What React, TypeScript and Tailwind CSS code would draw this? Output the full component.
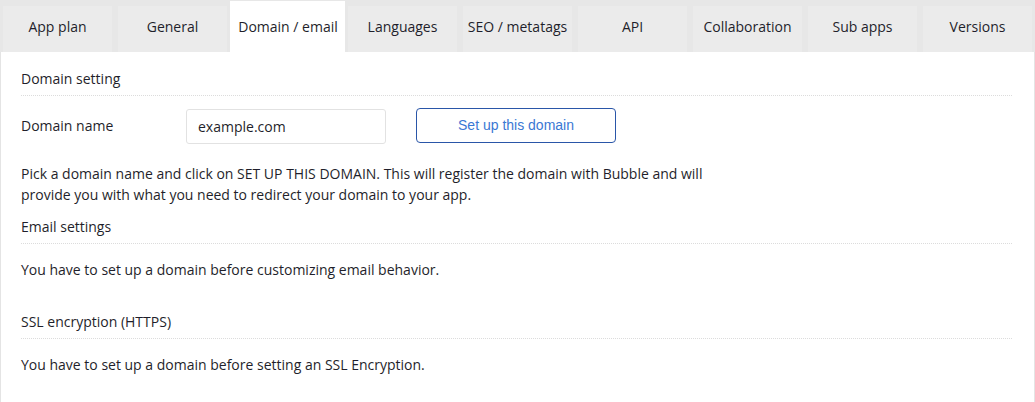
const tabs = [
  "App plan",
  "General",
  "Domain / email",
  "Languages",
  "SEO / metatags",
  "API",
  "Collaboration",
  "Sub apps",
  "Versions",
];

function Section({ title, children }: { title: string; children?: React.ReactNode }) {
  return (
    <div>
      <div className="h-[34px] flex items-center text-[14px]">{title}</div>
      <div className="border-t border-dotted border-[#dcdcdc] mr-[22px]" />
      {children}
    </div>
  );
}

export default function App() {
  const active = "Domain / email";
  return (
    <div
      className="w-[1035px] h-[402px] bg-white text-[#1f1f2b] overflow-hidden"
      style={{ fontFamily: '"Open Sans", sans-serif' }}
    >
      <div className="flex h-[52px] bg-[#e7e7e7] items-end">
        {tabs.map((t) => (
          <div
            key={t}
            className={
              t === active
                ? "w-[115px] h-[51px] bg-white flex items-center justify-center text-[14px] pl-px pt-px"
                : "w-[115px] h-[46px] flex items-center justify-center text-[14px] pl-[3px] pr-[3px]"
            }
          >
            <div
              className={
                t === active
                  ? "w-full h-full flex items-center justify-center pb-[1px]"
                  : "w-full h-full bg-[#ebebeb] flex items-center justify-center pb-[6px]"
              }
            >
              {t}
            </div>
          </div>
        ))}
      </div>
      <div className="h-[350px] border-l border-r border-[#e4e4e4] pl-[20px] pr-0">
        <div className="pt-[9px]">
          <Section title="Domain setting">
            <div className="flex items-center h-[46px] mt-[6px]">
              <div className="w-[165px] text-[14px] pt-[1px]">Domain name</div>
              <div className="w-[200px] h-[35px] border border-[#e2e2e2] rounded-[3px] flex items-center pl-[11px] text-[14px] mt-[2px]">
                example.com
              </div>
              <button
                className="ml-[30px] w-[200px] h-[35px] border border-[#2a56a8] rounded-[4px] text-[14px] text-[#3a78d4] bg-white"
                style={{ fontFamily: '"Liberation Sans", Arial, sans-serif' }}
              >
                Set up this domain
              </button>
            </div>
            <p className="mt-[15px] w-[700px] text-[14px] leading-[21px]">
              Pick a domain name and click on SET UP THIS DOMAIN. This will register the domain with Bubble and will
              provide you with what you need to redirect your domain to your app.
            </p>
          </Section>
          <div className="mt-[4px]">
            <Section title="Email settings">
              <div className="h-[52px] flex items-center text-[14px] pb-[1px]">
                You have to set up a domain before customizing email behavior.
              </div>
            </Section>
          </div>
          <div className="mt-[8px]">
            <Section title="SSL encryption (HTTPS)">
              <div className="h-[52px] flex items-center text-[14px] pb-[1px]">
                You have to set up a domain before setting an SSL Encryption.
              </div>
            </Section>
          </div>
        </div>
      </div>
    </div>
  );
}
